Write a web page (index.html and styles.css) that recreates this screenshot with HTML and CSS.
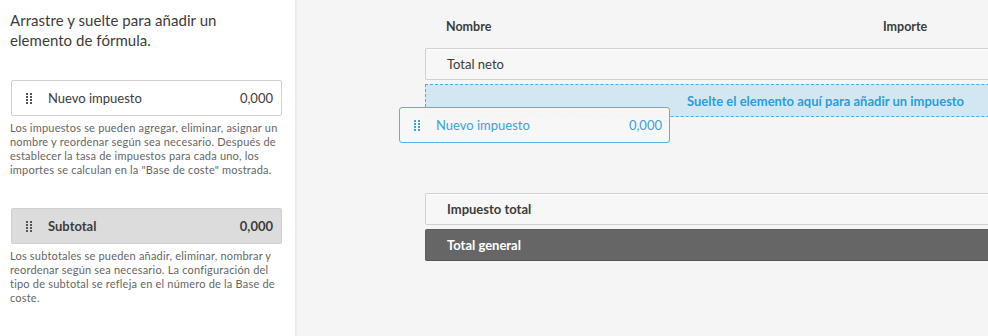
FILE: index.html
```html
<!DOCTYPE html>
<html lang="es">
<head>
<meta charset="utf-8">
<title>Fórmula</title>
<link rel="stylesheet" href="styles.css">
</head>
<body>
<aside class="sidebar">
  <h2 class="title">Arrastre y suelte para añadir un elemento de fórmula.</h2>
  <div class="item">
    <svg class="grip" width="6" height="11" viewBox="0 0 6 11"><g fill="#555"><rect x="0" y="0" width="2" height="2"/><rect x="4" y="0" width="2" height="2"/><rect x="0" y="3" width="2" height="2"/><rect x="4" y="3" width="2" height="2"/><rect x="0" y="6" width="2" height="2"/><rect x="4" y="6" width="2" height="2"/><rect x="0" y="9" width="2" height="2"/><rect x="4" y="9" width="2" height="2"/></g></svg>
    <span class="item-name">Nuevo impuesto</span>
    <span class="item-val">0,000</span>
  </div>
  <p class="desc">Los impuestos se pueden agregar, eliminar, asignar un nombre y reordenar según sea necesario. Después de establecer la tasa de impuestos para cada uno, los importes se calculan en la "Base de coste" mostrada.</p>
  <div class="item item-sub">
    <svg class="grip" width="6" height="11" viewBox="0 0 6 11"><g fill="#555"><rect x="0" y="0" width="2" height="2"/><rect x="4" y="0" width="2" height="2"/><rect x="0" y="3" width="2" height="2"/><rect x="4" y="3" width="2" height="2"/><rect x="0" y="6" width="2" height="2"/><rect x="4" y="6" width="2" height="2"/><rect x="0" y="9" width="2" height="2"/><rect x="4" y="9" width="2" height="2"/></g></svg>
    <span class="item-name">Subtotal</span>
    <span class="item-val">0,000</span>
  </div>
  <p class="desc">Los subtotales se pueden añadir, eliminar, nombrar y reordenar según sea necesario. La configuración del tipo de subtotal se refleja en el número de la Base de coste.</p>
</aside>
<main class="main">
  <div class="table">
    <div class="head">
      <span class="col-name">Nombre</span>
      <span class="col-amt">Importe</span>
    </div>
    <div class="row"><span class="row-name">Total neto</span></div>
    <div class="drop">Suelte el elemento aquí para añadir un impuesto</div>
    <div class="row row-bold spaced"><span class="row-name">Impuesto total</span></div>
    <div class="row row-grand"><span class="row-name">Total general</span></div>
  </div>
  <div class="ghost">
    <svg class="grip" width="6" height="11" viewBox="0 0 6 11"><g fill="#3aa3dc"><rect x="0" y="0" width="2" height="2"/><rect x="4" y="0" width="2" height="2"/><rect x="0" y="3" width="2" height="2"/><rect x="4" y="3" width="2" height="2"/><rect x="0" y="6" width="2" height="2"/><rect x="4" y="6" width="2" height="2"/><rect x="0" y="9" width="2" height="2"/><rect x="4" y="9" width="2" height="2"/></g></svg>
    <span class="item-name">Nuevo impuesto</span>
    <span class="item-val">0,000</span>
  </div>
</main>
</body>
</html>
```
FILE: styles.css
```css
* { box-sizing: border-box; }
html, body { margin: 0; height: 100%; }
body {
  display: flex;
  width: 988px;
  height: 336px;
  overflow: hidden;
  font-family: Lato, "Noto Sans", sans-serif;
  color: #3c3c3c;
  background: #f5f5f5;
}
.sidebar {
  width: 297px;
  flex: none;
  background: #fff;
  border-right: 2px solid #ececec;
  padding: 10px 14px 0 10px;
}
.title {
  margin: 0 0 30px 0;
  font-size: 15px;
  font-weight: 400;
  line-height: 20px;
  color: #3c3c3c;
  letter-spacing: 0.05px;
}
.item {
  display: flex;
  align-items: center;
  height: 36px;
  margin-left: 1px;
  width: 271px;
  border: 1px solid #cfcfcf;
  border-radius: 2px;
  background: #fff;
  padding: 0 8px 0 14px;
  font-size: 13px;
  color: #3c3c3c;
}
.grip { flex: none; }
.item-name { margin-left: 16px; flex: 1; }
.item-sub {
  background: #dcdcdc;
  font-weight: 700;
}
.desc {
  margin: 5px 0 0 0;
  font-size: 11px;
  line-height: 14px;
  letter-spacing: 0.2px;
  color: #666;
}
.desc + .item { margin-top: 31px; }
.main {
  flex: 1;
  position: relative;
  overflow: hidden;
  padding: 19px 0 0 128px;
  min-width: 0;
}
.table { width: 800px; }
.head {
  display: flex;
  height: 17px;
  font-size: 12.5px;
  font-weight: 700;
  color: #3c3c3c;
  margin-bottom: 12px;
}
.col-name { margin-left: 21px; width: 437px; }
.row {
  height: 32px;
  display: flex;
  align-items: center;
  border: 1px solid #d0d0d0;
  border-radius: 2px;
  background: #f7f7f7;
  box-shadow: inset 0 1px 0 #fff;
  font-size: 13px;
  margin-bottom: 4px;
}
.row-name { margin-left: 21px; }
.row-bold { font-weight: 700; }
.spaced { margin-top: 76px; }
.row-grand {
  background: #666;
  border-color: #5e5e5e;
  border-bottom-color: #555;
  box-shadow: none;
  color: #fff;
  font-weight: 700;
}
.drop {
  height: 33px;
  display: flex;
  align-items: center;
  justify-content: center;
  background: #d3e7f3;
  border: 1px dashed #49ade0;
  border-right: none;
  font-size: 13px;
  font-weight: 700;
  color: #2f9bd6;
}
.ghost {
  position: absolute;
  left: 102px;
  top: 107px;
  width: 271px;
  height: 36px;
  display: flex;
  align-items: center;
  border: 1px solid #55b2e2;
  border-radius: 3px;
  background: rgba(247, 247, 247, 0.96);
  padding: 0 7px 0 14px;
  font-size: 13px;
  color: #3aa3dc;
}
.ghost .item-name { margin-left: 16px; }
```
